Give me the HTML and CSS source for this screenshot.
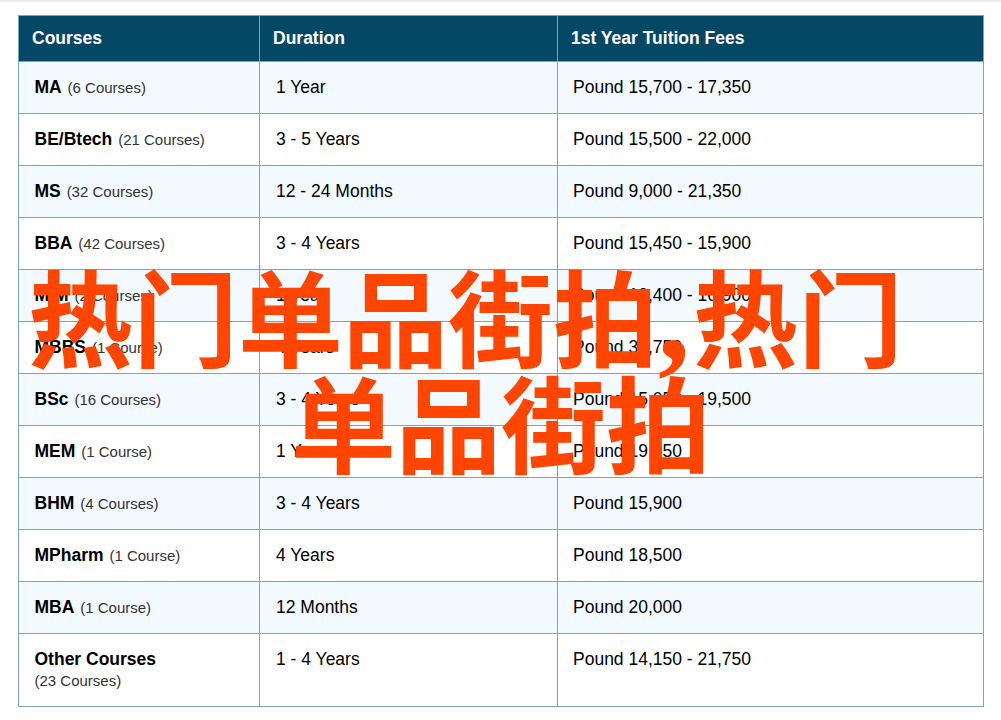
FILE: index.html
```html
<!DOCTYPE html>
<html lang="zh">
<head>
<meta charset="utf-8">
<title>热门单品街拍</title>
<link rel="stylesheet" href="styles.css">
</head>
<body>
<div class="shade"></div>
<table class="fees">
<colgroup><col class="c1"><col class="c2"><col class="c3"></colgroup>
<thead><tr><th>Courses</th><th>Duration</th><th>1st Year Tuition Fees</th></tr></thead>
<tbody>
<tr><td class="course"><b>MA</b> <span>(6 Courses)</span></td><td class="dur">1 Year</td><td>Pound 15,700 - 17,350</td></tr>
<tr><td class="course"><b>BE/Btech</b> <span>(21 Courses)</span></td><td class="dur">3 - 5 Years</td><td>Pound 15,500 - 22,000</td></tr>
<tr><td class="course"><b>MS</b> <span>(32 Courses)</span></td><td class="dur">12 - 24 Months</td><td>Pound 9,000 - 21,350</td></tr>
<tr><td class="course"><b>BBA</b> <span>(42 Courses)</span></td><td class="dur">3 - 4 Years</td><td>Pound 15,450 - 15,900</td></tr>
<tr><td class="course"><b>MIM</b> <span>(2 Courses)</span></td><td class="dur">1 Year</td><td>Pound 13,400 - 16,900</td></tr>
<tr><td class="course"><b>MBBS</b> <span>(1 Course)</span></td><td class="dur">4 Years</td><td>Pound 38,750</td></tr>
<tr><td class="course"><b>BSc</b> <span>(16 Courses)</span></td><td class="dur">3 - 4 Years</td><td>Pound 15,050 - 19,500</td></tr>
<tr><td class="course"><b>MEM</b> <span>(1 Course)</span></td><td class="dur">1 Year</td><td>Pound 19,950</td></tr>
<tr><td class="course"><b>BHM</b> <span>(4 Courses)</span></td><td class="dur">3 - 4 Years</td><td>Pound 15,900</td></tr>
<tr><td class="course"><b>MPharm</b> <span>(1 Course)</span></td><td class="dur">4 Years</td><td>Pound 18,500</td></tr>
<tr><td class="course"><b>MBA</b> <span>(1 Course)</span></td><td class="dur">12 Months</td><td>Pound 20,000</td></tr>
<tr class="tall"><td class="course"><b>Other Courses</b><span class="under">(23 Courses)</span></td><td class="dur">1 - 4 Years</td><td>Pound 14,150 - 21,750</td></tr>
</tbody>
</table>
<h1 class="overlay"><span class="line first">热门单品街拍<span class="comma">,</span>热门</span><span class="line second">单品街拍</span></h1>
</body>
</html>
```
FILE: styles.css
```css
html, body { margin: 0; padding: 0; }
body {
  width: 1001px;
  height: 720px;
  overflow: hidden;
  position: relative;
  background: #fff;
  font-family: "Liberation Sans", Arial, sans-serif;
  color: #000;
}
.shade {
  height: 3px;
  background: linear-gradient(#e4e4e4, #fff);
}
.fees {
  margin: 12px 0 0 18px;
  width: 965px;
  border-collapse: collapse;
  table-layout: fixed;
  font-size: 17.5px;
  line-height: 22px;
}
.c1 { width: 241px; }
.c2 { width: 298px; }
.c3 { width: 426px; }
.fees th, .fees td {
  border: 1px solid #7ba3bb;
  text-align: left;
  vertical-align: top;
}
.fees th {
  height: 46px;
  box-sizing: border-box;
  background: #054866;
  color: #fff;
  font-weight: bold;
  padding: 11px 13px;
}
.fees td {
  height: 52px;
  box-sizing: border-box;
  padding: 14px 15px;
}
.fees tbody tr:nth-child(odd) { background: #f2f9ff; }
.fees .course { padding-left: 15.5px; }
.course span { font-size: 15px; color: #333; margin-left: 1px; }
.course .under { display: block; margin: 0; }
.fees .dur { padding-left: 16px; }
.tall td { height: 73px; }
.overlay {
  position: absolute;
  left: 0;
  top: 260px;
  width: 1001px;
  margin: 0;
  font-family: "Noto Sans CJK SC", sans-serif;
  font-size: 105px;
  line-height: 106px;
  font-weight: bold;
  color: #ff4500;
  white-space: nowrap;
}
.line { display: block; height: 106px; }
.first { padding-left: 28px; }
.second { padding-left: 291px; }
.comma {
  font-family: "Liberation Serif", serif;
  font-size: 128px;
  line-height: 0;
  letter-spacing: 3px;
}
```
